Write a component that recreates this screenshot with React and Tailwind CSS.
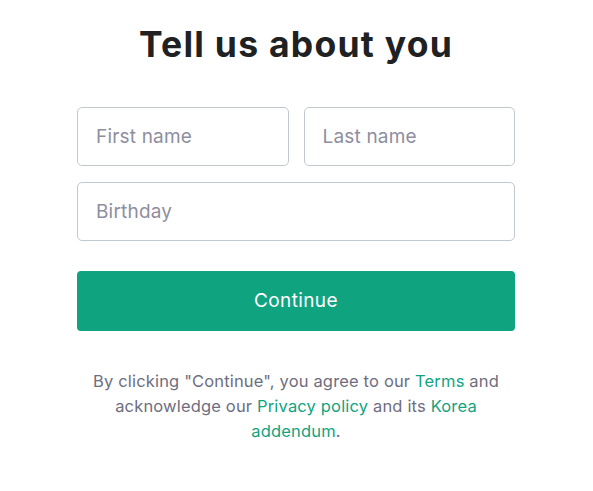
import React from 'react';

const fieldClass =
  "h-[59px] w-full rounded-[5px] border border-[#c2c8d0] bg-white px-[18px] text-[19px] tracking-[0.01em] text-[#2d333a] placeholder:text-[#8e8ea0] outline-none";

const App = () => {
  return (
    <div className="min-h-[491px] w-full bg-white font-['Inter',sans-serif] flex justify-center">
      <div className="w-[438px] mr-[1px] pt-[22px] flex flex-col items-center">
        {/* Heading */}
        <h1 className="text-[35.5px] leading-[46px] font-bold text-[#202123] tracking-[0.035em]">
          Tell us about you
        </h1>

        {/* Form */}
        <div className="mt-[39px] w-full flex flex-col gap-[16px]">
          <div className="grid grid-cols-2 gap-[15px]">
            <input className={fieldClass} placeholder="First name" />
            <input className={fieldClass} placeholder="Last name" />
          </div>
          <input className={fieldClass} placeholder="Birthday" />
        </div>

        <button className="mt-[30px] h-[60px] w-full rounded-[4px] bg-[#10a37f] text-white text-[19px] tracking-[0.02em]">
          Continue
        </button>

        {/* Legal text */}
        <p className="mt-[38px] px-[10px] text-center text-[16.5px] leading-[25px] tracking-[0.01em] text-[#6e6e80]">
          By clicking "Continue", you agree to our{' '}
          <a className="text-[#10a37f]">Terms</a> and acknowledge our{' '}
          <a className="text-[#10a37f]">Privacy policy</a> and its{' '}
          <a className="text-[#10a37f]">Korea addendum</a>.
        </p>
      </div>
    </div>
  );
};

export default App;
